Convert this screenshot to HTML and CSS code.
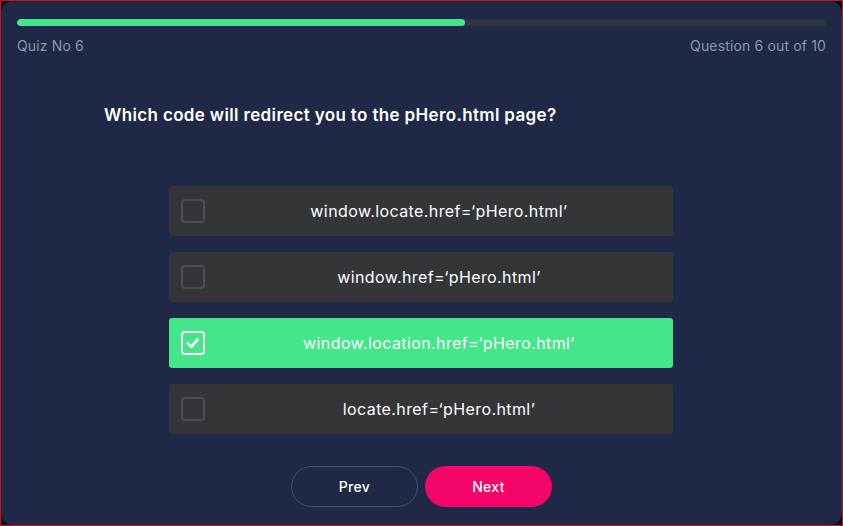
FILE: index.html
```html
<!DOCTYPE html>
<html>
<head>
<meta charset="utf-8">
<link rel="stylesheet" href="styles.css">
</head>
<body>
<div class="frame">
  <div class="card">
    <div class="progress"><div class="progress-fill" style="width:55.4%"></div></div>
    <div class="meta">
      <span>Quiz No 6</span>
      <span>Question 6 out of 10</span>
    </div>
    <h1 class="question">Which code will redirect you to the pHero.html page?</h1>
    <div class="options">
      <div class="option"><span class="box"></span><span class="label">window.locate.href=‘pHero.html’</span></div>
      <div class="option"><span class="box"></span><span class="label">window.href=‘pHero.html’</span></div>
      <div class="option selected"><span class="box"><svg viewBox="0 0 20 20"><path d="M5 10.5l3.3 3.3 6.2-7.3" fill="none" stroke="#fff" stroke-width="2.8" stroke-linecap="round" stroke-linejoin="round"/></svg></span><span class="label">window.location.href=‘pHero.html’</span></div>
      <div class="option"><span class="box"></span><span class="label">locate.href=‘pHero.html’</span></div>
    </div>
    <div class="nav">
      <button class="btn prev">Prev</button>
      <button class="btn next">Next</button>
    </div>
  </div>
</div>
</body>
</html>
```
FILE: styles.css
```css
* { box-sizing: border-box; }
html, body { margin: 0; padding: 0; }
body {
  font-family: Inter, "Open Sans", sans-serif;
  background: #0b0d16;
}
.frame {
  width: 843px;
  height: 526px;
  border: 1px solid #c8141c;
  background: #0b0d16;
}
.card {
  height: 100%;
  background: #1f2846;
  border-radius: 12px;
  padding: 18px 16px 0 16px;
}
.progress {
  height: 7px;
  background: #30363f;
  border-radius: 4px;
  overflow: hidden;
}
.progress-fill {
  height: 100%;
  background: #44e68a;
  border-radius: 4px;
}
.meta {
  display: flex;
  justify-content: space-between;
  margin-top: 11px;
  font-size: 14px;
  color: #8f96a9;
  letter-spacing: 0.15px;
}
.question {
  margin: 51px 0 0 87px;
  font-size: 17px;
  font-weight: 600;
  color: #ffffff;
  letter-spacing: 0.35px;
}
.options {
  margin: 61px 0 0 152px;
  width: 504px;
  display: flex;
  flex-direction: column;
  gap: 16px;
}
.option {
  height: 50px;
  background: #333538;
  border-radius: 3px;
  display: flex;
  align-items: center;
  padding: 0 0 0 12px;
  color: #ffffff;
  font-size: 16px;
  letter-spacing: 0.4px;
}
.option.selected { background: #44e68a; }
.box {
  width: 24px;
  height: 24px;
  border: 2px solid #4b4e53;
  border-radius: 4px;
  flex: none;
  display: flex;
  align-items: center;
  justify-content: center;
}
.box svg { width: 20px; height: 20px; display: block; }
.selected .box { border-color: #ffffff; }
.label {
  flex: 1;
  text-align: center;
  padding-left: 0;
}
.nav {
  display: flex;
  justify-content: center;
  gap: 7px;
  margin-top: 32px;
}
.btn {
  width: 127px;
  height: 41px;
  border-radius: 21px;
  font-family: inherit;
  font-size: 14px;
  font-weight: 500;
  letter-spacing: 0.3px;
  color: #ffffff;
  cursor: pointer;
}
.prev {
  background: transparent;
  border: 1px solid #4b5368;
}
.next {
  background: #f5046a;
  border: none;
}
```
